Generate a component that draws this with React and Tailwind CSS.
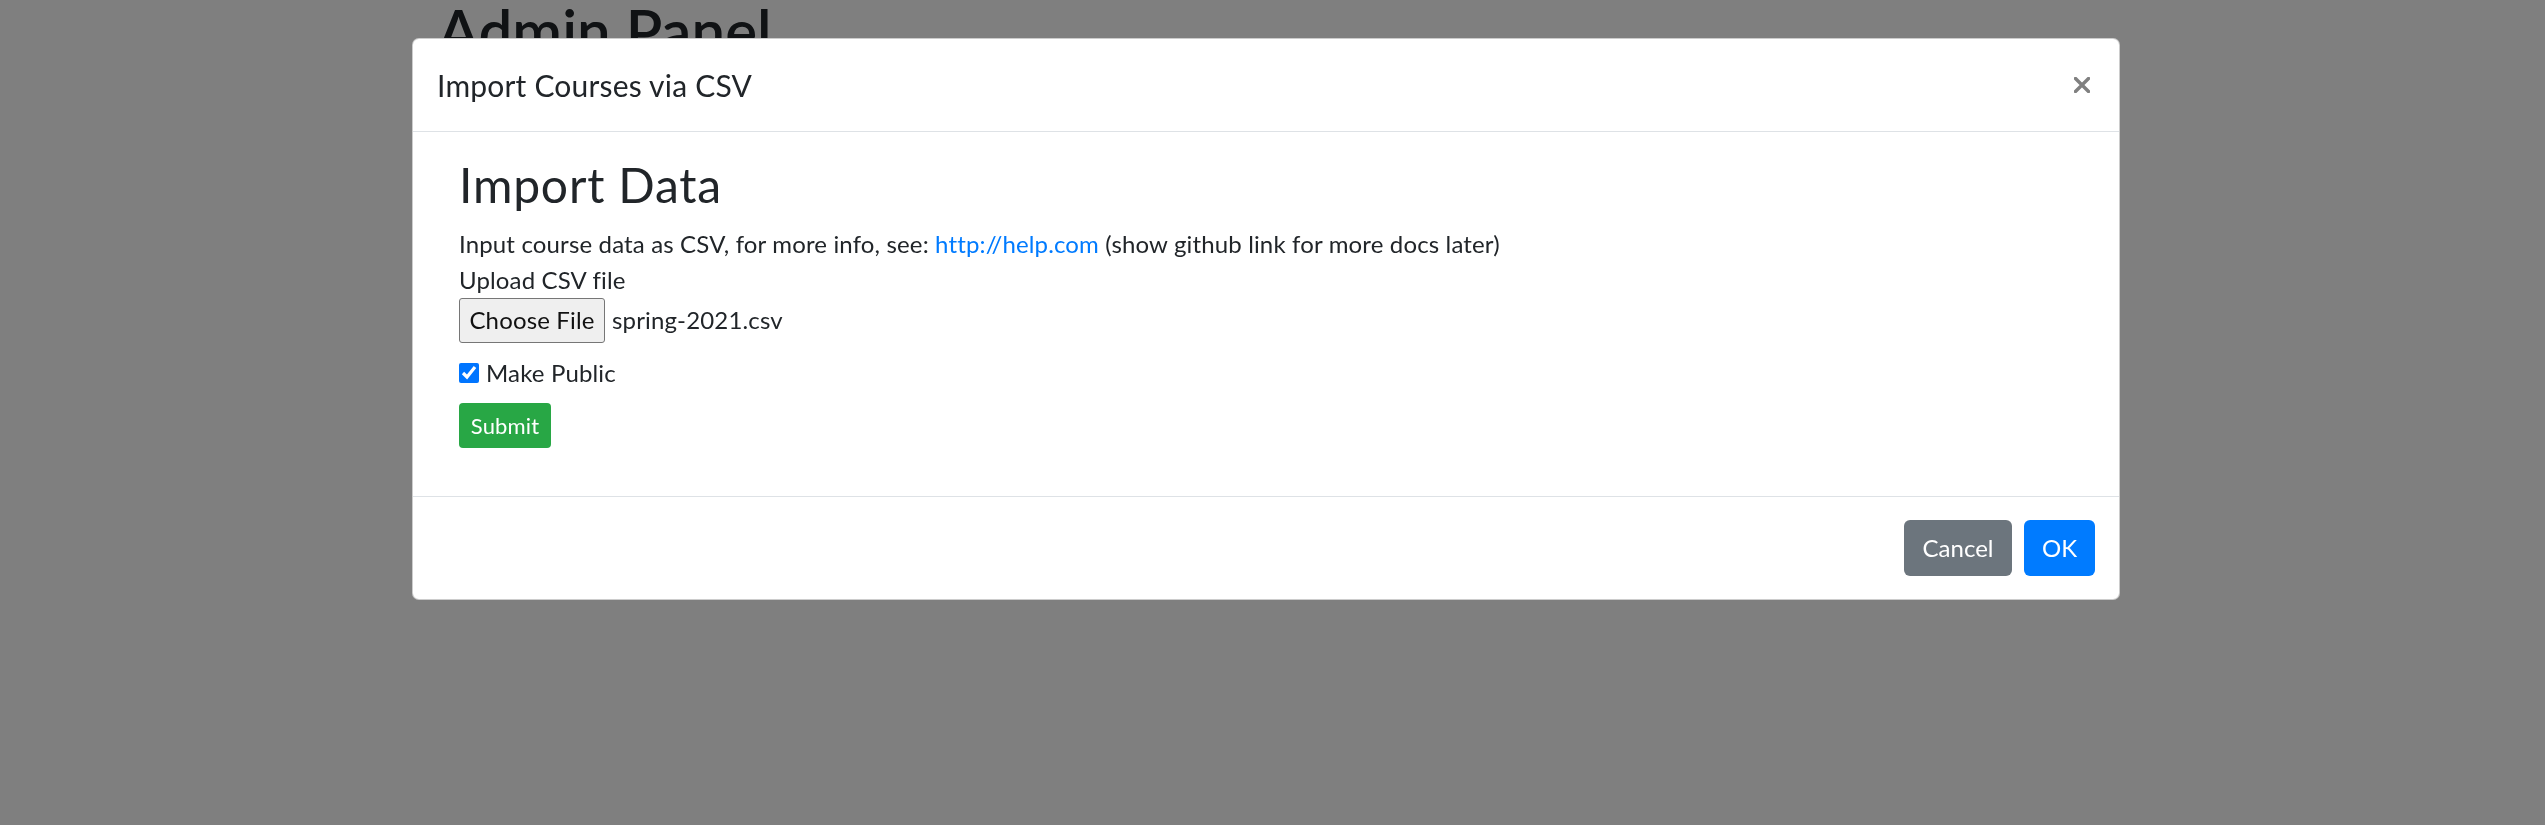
import React, { useState } from 'react';

const font = "font-['Lato','Noto_Sans',sans-serif]";

const CloseIcon = () => (
  <svg width="16" height="16" viewBox="0 0 16 16" className="block">
    <path d="M1.5 1.5 L14.5 14.5 M14.5 1.5 L1.5 14.5" stroke="#808080" strokeWidth="3.4" strokeLinecap="square" />
  </svg>
);

const ImportModal = () => {
  const [isPublic, setIsPublic] = useState(true);

  return (
    <div className="w-[1708px] rounded-[7px] border border-black/20 bg-white text-[#212529]">
      {/* Header */}
      <div className="flex h-[93px] items-center justify-between border-b border-[#dee2e6] px-[24px]">
        <h5 className="text-[30px] leading-[45px] font-normal tracking-[0.2px]">Import Courses via CSV</h5>
        <button className="mr-[5px]">
          <CloseIcon />
        </button>
      </div>

      {/* Body */}
      <div className="px-[24px] pt-[24px] pb-[48px] tracking-[0.15px]">
        <div className="pl-[22px]">
          <h2 className="mb-[12px] text-[48px] leading-[57.6px] font-normal tracking-[0.8px]">Import Data</h2>
          <p className="text-[24px] leading-[36px]">
            Input course data as CSV, for more info, see:{' '}
            <a href="#" className="text-[#007bff]">http://help.com</a> (show github link for more docs later)
          </p>
          <div className="text-[24px] leading-[36px]">Upload CSV file</div>
          <div className="flex h-[45px] items-center text-[24px]">
            <button className="flex h-[45px] w-[146px] items-center justify-center rounded-[3px] border border-[#767676] bg-[#efefef] text-[24px] text-[#111]">
              Choose File
            </button>
            <span className="ml-[7px] leading-[36px]">spring-2021.csv</span>
          </div>
          <label className="mt-[12px] flex h-[36px] items-center text-[24px]">
            <input
              type="checkbox"
              checked={isPublic}
              onChange={() => setIsPublic(!isPublic)}
              className="m-0 mr-[7px] h-[20px] w-[20px] accent-[#0075ff]"
            />
            Make Public
          </label>
          <button className="mt-[12px] h-[45px] w-[92px] rounded-[4px] bg-[#28a745] text-[22px] text-white">
            Submit
          </button>
        </div>
      </div>

      {/* Footer */}
      <div className="flex h-[103px] items-center justify-end border-t border-[#dee2e6] px-[18px]">
        <button className="mx-[6px] h-[56px] w-[108px] rounded-[6px] bg-[#6c757d] text-[24px] text-white">Cancel</button>
        <button className="mx-[6px] h-[56px] w-[71px] rounded-[6px] bg-[#007bff] text-[24px] text-white">OK</button>
      </div>
    </div>
  );
};

export default function App() {
  return (
    <div className={`relative h-[825px] overflow-hidden bg-white ${font}`}>
      <div className="pl-[438px]">
        <h1 className="-mt-[6px] text-[60px] leading-[72px] font-semibold text-[#212529]">Admin Panel</h1>
      </div>

      {/* Backdrop */}
      <div className="fixed inset-0 bg-black/50 pt-[38px] pl-[412px]">
        <ImportModal />
      </div>
    </div>
  );
}
